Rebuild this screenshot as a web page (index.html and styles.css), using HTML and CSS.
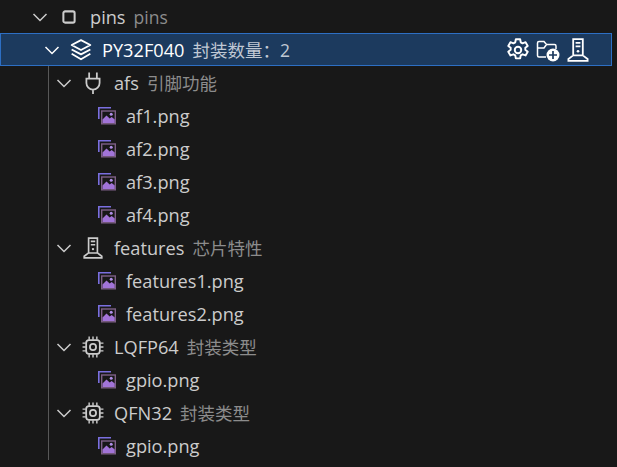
FILE: index.html
```html
<!DOCTYPE html>
<html lang="zh">
<head>
<meta charset="UTF-8" />
<title>pins</title>
<link rel="stylesheet" href="styles.css">
</head>
<body>
<svg class="sprites" width="0" height="0">
    <defs>
        <symbol id="chevron" viewBox="0 0 16 16"><path d="M1.500 5l6.500 6.500 6.500-6.500" fill="none" stroke="currentColor" stroke-width="1.500"/></symbol>
        <symbol id="square" viewBox="0 0 16 16"><rect x="3" y="3" width="10" height="10" rx="1.500" fill="none" stroke="currentColor" stroke-width="1.800"/></symbol>
        <symbol id="layers" viewBox="0 0 20 20"><path d="M10 1l8.500 4.500-8.500 4.500-8.500-4.500z M1.500 9.500l8.500 4.500 8.500-4.500 M1.500 13.500l8.500 5 8.500-5" fill="none" stroke="currentColor" stroke-width="1.600" stroke-linejoin="round"/></symbol>
        <symbol id="plug" viewBox="0 0 20 20"><path d="M6.500 0.500v5.500 M13.500 0.500v5.500 M4 6h12v4a6 6 0 0 1-12 0z M10 15.500v4.500" fill="none" stroke="currentColor" stroke-width="1.600"/></symbol>
        <symbol id="server" viewBox="0 0 20 20"><path d="M6 1h8v13.500h-8z M8 4h4 M8 7h4 M6 14.500l-4 3v1.500h16v-1.500l-4-3" fill="none" stroke="currentColor" stroke-width="1.500"/><circle cx="10" cy="11" r="1.100" fill="currentColor"/></symbol>
        <symbol id="chip" viewBox="0 0 20 20"><rect x="3.800" y="3.800" width="12.400" height="12.400" rx="2.500" fill="none" stroke="currentColor" stroke-width="1.600"/><circle cx="10" cy="10" r="2.800" fill="none" stroke="currentColor" stroke-width="1.600"/><path d="M6.500 0.500v3 M10 0.500v3 M13.500 0.500v3 M6.500 16.500v3 M10 16.500v3 M13.500 16.500v3 M0.500 6.500h3 M0.500 10h3 M0.500 13.500h3 M16.500 6.500h3 M16.500 10h3 M16.500 13.500h3" stroke="currentColor" stroke-width="1.300"/></symbol>
        <symbol id="gear" viewBox="0 0 20 20"><path d="M8.200 1h3.600l.5 2.600 1.500.8 2.500-.9 1.800 3.100-2 1.600v1.600l2 1.600-1.800 3.100-2.500-.9-1.500.8-.5 2.600H8.200l-.5-2.600-1.500-.8-2.500.9-1.800-3.100 2-1.600V8.200l-2-1.600 1.800-3.100 2.500.9 1.500-.8z" fill="none" stroke="currentColor" stroke-width="1.600" stroke-linejoin="round"/><circle cx="10" cy="10" r="2.700" fill="none" stroke="currentColor" stroke-width="1.600"/></symbol>
        <symbol id="folder-add" viewBox="0 0 24 24"><path d="M10 19H3a1.500 1.500 0 0 1-1.500-1.500V5A1.500 1.500 0 0 1 3 3.500h5l2.500 3h8a1.500 1.500 0 0 1 1.500 1.500v3 M1.500 10h6.500l2.500-3.500" fill="none" stroke="currentColor" stroke-width="1.500"/><circle cx="17" cy="17" r="6.500" fill="currentColor"/><path d="M17 13v8 M13 17h8" stroke="#1c3a5e" stroke-width="1.700"/></symbol>
        <symbol id="image" viewBox="0 0 18 18"><path d="M0.800 12V0.800h12.200" fill="none" stroke="#7a6fe0" stroke-width="1.600"/><rect x="3.700" y="4" width="13.600" height="12.800" fill="none" stroke="#7d5f86" stroke-width="1.400"/><path d="M4.500 16v-3.500l4-4 3.200 3 2-1.500 3 2.500V16z" fill="#a274d8"/><circle cx="13.200" cy="7.200" r="1.500" fill="#b08fe8"/></symbol>
    </defs>
</svg>

<div class="tree">
    <div class="row depth-0">
        <svg class="twistie"><use href="#chevron"/></svg>
        <svg class="icon small"><use href="#square"/></svg>
        <span class="label">pins</span><span class="desc">pins</span>
    </div>
    <div class="row depth-1 selected">
        <svg class="twistie"><use href="#chevron"/></svg>
        <svg class="icon"><use href="#layers"/></svg>
        <span class="label">PY32F040</span><span class="desc">封装数量：2</span>
        <div class="actions">
            <svg class="action"><use href="#gear"/></svg>
            <svg class="action"><use href="#folder-add"/></svg>
            <svg class="action"><use href="#server"/></svg>
        </div>
    </div>
    <div class="children">
        <div class="row depth-2">
            <svg class="twistie"><use href="#chevron"/></svg>
            <svg class="icon"><use href="#plug"/></svg>
            <span class="label">afs</span><span class="desc">引脚功能</span>
        </div>
        <div class="row file"><svg class="file-icon"><use href="#image"/></svg><span class="label">af1.png</span></div>
        <div class="row file"><svg class="file-icon"><use href="#image"/></svg><span class="label">af2.png</span></div>
        <div class="row file"><svg class="file-icon"><use href="#image"/></svg><span class="label">af3.png</span></div>
        <div class="row file"><svg class="file-icon"><use href="#image"/></svg><span class="label">af4.png</span></div>
        <div class="row depth-2">
            <svg class="twistie"><use href="#chevron"/></svg>
            <svg class="icon"><use href="#server"/></svg>
            <span class="label">features</span><span class="desc">芯片特性</span>
        </div>
        <div class="row file"><svg class="file-icon"><use href="#image"/></svg><span class="label">features1.png</span></div>
        <div class="row file"><svg class="file-icon"><use href="#image"/></svg><span class="label">features2.png</span></div>
        <div class="row depth-2">
            <svg class="twistie"><use href="#chevron"/></svg>
            <svg class="icon"><use href="#chip"/></svg>
            <span class="label">LQFP64</span><span class="desc">封装类型</span>
        </div>
        <div class="row file"><svg class="file-icon"><use href="#image"/></svg><span class="label">gpio.png</span></div>
        <div class="row depth-2">
            <svg class="twistie"><use href="#chevron"/></svg>
            <svg class="icon"><use href="#chip"/></svg>
            <span class="label">QFN32</span><span class="desc">封装类型</span>
        </div>
        <div class="row file"><svg class="file-icon"><use href="#image"/></svg><span class="label">gpio.png</span></div>
    </div>
</div>
</body>
</html>
```

FILE: styles.css
```css
html, body {
    height: 100%;
}

body {
    margin: 0;
    background: #181818;
    color: #cccccc;
    font-family: "Open Sans", "Noto Sans CJK SC", sans-serif;
    font-size: 18.2px;
    overflow: hidden;
}

.sprites {
    display: block;
    height: 0;
}

.tree {
    width: 612px;
}

.row {
    display: flex;
    align-items: center;
    height: 33px;
    box-sizing: border-box;
    white-space: nowrap;
}

.depth-0 { padding-left: 30px; }
.depth-1 { padding-left: 42px; }
.depth-2 { padding-left: 54px; }
.file { padding-left: 98px; }

.selected {
    background: #1c3a5e;
    border: 1px solid #2d6fc4;
    padding-left: 41px;
    color: #ffffff;
}

/* indent guide */
.children {
    position: relative;
    height: 394px;
}
.children::before {
    content: "";
    position: absolute;
    left: 48px;
    top: 0;
    bottom: 0;
    width: 1px;
    background: #585858;
}

.twistie {
    width: 20px;
    height: 16px;
    flex: none;
    color: #cccccc;
}
.selected .twistie { color: #ffffff; }

.icon {
    width: 22px;
    height: 22px;
    flex: none;
    margin: 0 10px 0 8px;
}
.icon.small {
    width: 18px;
    height: 18px;
    margin: 0 12px 0 10px;
}

.file-icon {
    width: 18px;
    height: 18px;
    flex: none;
    margin-right: 10px;
}

.desc {
    margin-left: 8px;
    color: #8c8c8c;
    font-size: 17.5px;
}
.selected .desc { color: #c0c8d4; }

.actions {
    display: flex;
    align-items: center;
    gap: 6px;
    margin-left: auto;
    padding-right: 21px;
}
.action {
    width: 24px;
    height: 24px;
    color: #ffffff;
}
```
